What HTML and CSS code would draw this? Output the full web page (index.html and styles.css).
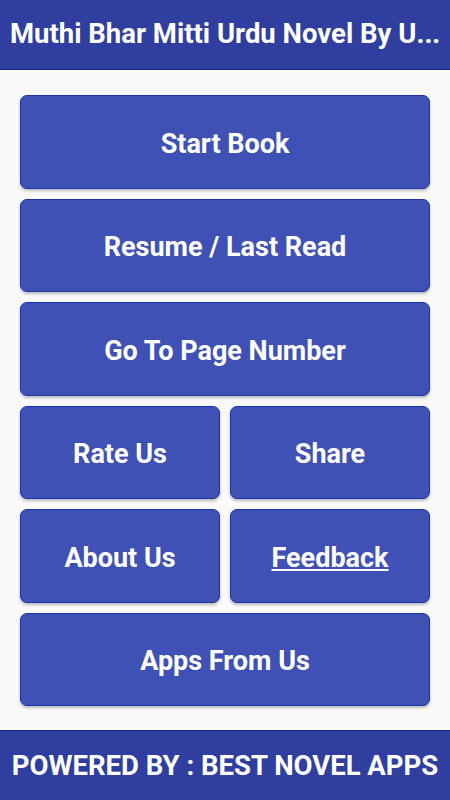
FILE: index.html
```html
<!DOCTYPE html>
<html>
    <head>
        <title>Muthi Bhar Mitti</title>
        <meta charset="UTF-8">
        <link rel="stylesheet" href="styles.css">
    </head>
    <body>
        <div class="app">
            <div class="toolbar">
                <div class="toolbar_title">Muthi Bhar Mitti Urdu Novel By U...</div>
            </div>
            <div class="menu">
                <button class="menu_btn">Start Book</button>
                <button class="menu_btn">Resume / Last Read</button>
                <button class="menu_btn">Go To Page Number</button>
                <div class="menu_row">
                    <button class="menu_btn">Rate Us</button>
                    <button class="menu_btn">Share</button>
                </div>
                <div class="menu_row">
                    <button class="menu_btn">About Us</button>
                    <button class="menu_btn link">Feedback</button>
                </div>
                <button class="menu_btn">Apps From Us</button>
            </div>
            <div class="footer">POWERED BY : BEST NOVEL APPS</div>
        </div>
    </body>
</html>
```

FILE: styles.css
```css
html, body {
    margin: 0;
    padding: 0;
    height: 100%;
}
body {
    background-color: #fafafa;
    font-family: Roboto, "Liberation Sans", sans-serif;
}
.app {
    display: flex;
    flex-direction: column;
    height: 800px;
}
.toolbar {
    height: 69px;
    background-color: #303f9f;
    border-bottom: 1px solid #1a1f8a;
    display: flex;
    align-items: center;
    padding: 0 10px;
}
.toolbar_title {
    color: white;
    font-size: 27.5px;
    font-weight: bold;
    white-space: nowrap;
    padding-bottom: 2px;
}
.menu {
    flex: 1;
    display: flex;
    flex-direction: column;
    gap: 10px;
    padding: 25px 20px 0 20px;
}
.menu_row {
    display: flex;
    gap: 10px;
}
.menu_row .menu_btn {
    flex: 1;
}
.menu_btn {
    height: 93.5px;
    background-color: #3f51b5;
    border: 1px solid #1c34b0;
    border-radius: 7px;
    box-shadow: 0 2px 3px rgba(0, 0, 0, 0.25);
    color: white;
    font-family: Roboto, "Liberation Sans", sans-serif;
    font-size: 27px;
    font-weight: bold;
    padding: 4px 0 0 0;
}
.menu_btn.link {
    text-decoration: underline;
}
.footer {
    height: 69px;
    background-color: #303f9f;
    border-top: 1px solid #1a1f8a;
    color: white;
    font-size: 27.5px;
    font-weight: bold;
    display: flex;
    align-items: center;
    justify-content: center;
    white-space: nowrap;
}
```
